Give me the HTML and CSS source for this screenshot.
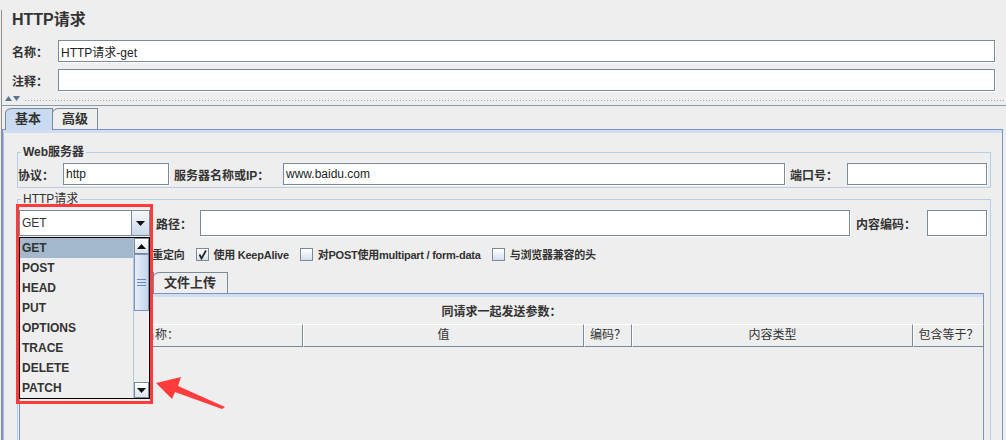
FILE: index.html
```html
<!DOCTYPE html>
<html lang="zh-CN">
<head>
    <meta charset="UTF-8">
    <title>HTTP请求</title>
    <link rel="stylesheet" href="styles.css">
</head>
<body>
    <div class="app">
        <div class="title">HTTP请求</div>

        <div class="field-row">
            <span class="field-label">名称：</span>
            <input class="text-input" value="HTTP请求-get">
        </div>
        <div class="field-row second">
            <span class="field-label">注释：</span>
            <input class="text-input" value="">
        </div>

        <!-- split pane divider -->
        <div class="splitter">
            <svg class="split-arrow" width="7" height="5" viewBox="0 0 7 5"><path d="M0 5 L3.5 0 L7 5 Z" fill="#5d7190"/></svg>
            <svg class="split-arrow" width="7" height="5" viewBox="0 0 7 5"><path d="M0 0 L7 0 L3.5 5 Z" fill="#5d7190"/></svg>
            <div class="dots"></div>
        </div>

        <div class="tabs">
            <div class="tab active basic">基本</div>
            <div class="tab advanced">高级</div>
        </div>

        <div class="tab-panel">
            <fieldset class="group">
                <legend>Web服务器</legend>
                <div class="group-row">
                    <span class="label w-proto">协议：</span>
                    <input class="text-input proto" value="http">
                    <span class="label w-host">服务器名称或IP：</span>
                    <input class="text-input host" value="www.baidu.com">
                    <span class="label w-port">端口号：</span>
                    <input class="text-input port" value="">
                </div>
            </fieldset>

            <fieldset class="group http">
                <legend class="plain">HTTP请求</legend>
                <div class="group-row tall">
                    <div class="combo">
                        <span class="combo-value">GET</span>
                        <span class="combo-btn">
                            <svg width="9" height="5" viewBox="0 0 9 5"><path d="M0 0 L9 0 L4.5 5 Z" fill="#111"/></svg>
                        </span>
                    </div>
                    <span class="label w-path">路径：</span>
                    <input class="text-input path" value="">
                    <span class="label w-enc">内容编码：</span>
                    <input class="text-input enc" value="">
                </div>

                <div class="option-row">
                    <label class="option"><span class="checkbox"></span>自动重定向</label>
                    <label class="option"><span class="checkbox"></span>跟随重定向</label>
                    <label class="option"><span class="checkbox checked"><svg width="11" height="11" viewBox="0 0 11 11"><path d="M2.5 5.5 L4.5 9.5 L9 1.5" fill="none" stroke="#222" stroke-width="1.7"/></svg></span>使用 KeepAlive</label>
                    <label class="option"><span class="checkbox"></span>对POST使用multipart / form-data</label>
                    <label class="option"><span class="checkbox"></span>与浏览器兼容的头</label>
                </div>

                <!-- first tab sits under the open list -->
                <div class="sub-tabs">
                    <div class="tab active params"></div>
                    <div class="tab upload">文件上传</div>
                </div>
                <div class="param-panel">
                    <div class="param-caption">同请求一起发送参数：</div>
                    <div class="param-head">
                        <div class="head-cell">名称：</div>
                        <div class="head-cell">值</div>
                        <div class="head-cell">编码？</div>
                        <div class="head-cell">内容类型</div>
                        <div class="head-cell">包含等于？</div>
                    </div>
                </div>
            </fieldset>
        </div>
    </div>

    <!-- open combo list, drawn over the form -->
    <div class="popup">
        <div class="popup-list">
            <div class="popup-item active">GET</div>
            <div class="popup-item">POST</div>
            <div class="popup-item">HEAD</div>
            <div class="popup-item">PUT</div>
            <div class="popup-item">OPTIONS</div>
            <div class="popup-item">TRACE</div>
            <div class="popup-item">DELETE</div>
            <div class="popup-item">PATCH</div>
        </div>
        <div class="scrollbar">
            <div class="scroll-btn">
                <svg width="9" height="5" viewBox="0 0 9 5"><path d="M0 5 L4.5 0 L9 5 Z" fill="#111"/></svg>
            </div>
            <div class="scroll-thumb"><span class="grip"></span></div>
            <div class="scroll-track"></div>
            <div class="scroll-btn">
                <svg width="9" height="5" viewBox="0 0 9 5"><path d="M0 0 L9 0 L4.5 5 Z" fill="#111"/></svg>
            </div>
        </div>
    </div>

    <!-- annotation -->
    <div class="callout-box"></div>
    <svg class="callout-arrow" width="80" height="45" viewBox="0 0 80 45">
        <path d="M6 13 L31 7 L28 16 L75 37 L72 39 L25 22 L22 29 Z" fill="#ff3b3b"/>
    </svg>
</body>
</html>
```

FILE: styles.css
```css
:root {
    --bg: #eeeeee;
    --edge: #7a8a99;
    --tab-blue: #c8dbf0;
    --panel-blue: #7b93c4;
    --strip: #cfdff1;
    --group: #b7cde6;
    --text: #333;
    --mark: #ff3b3b;
    --ui-font: "Liberation Sans", "Noto Sans CJK SC", sans-serif;
}

body {
    margin: 0;
    width: 1006px;
    height: 440px;
    overflow: hidden;
    position: relative;
    background: var(--bg);
    font-family: var(--ui-font);
    font-size: 12px;
    color: var(--text);
}

.app {
    margin-left: 1px;
    border-left: 1px solid #909090;
    height: 100%;
}

.title {
    margin: 10px 0 0 10px;
    height: 20px;
    line-height: 20px;
    font-size: 16px;
    font-weight: bold;
}

.field-row {
    display: flex;
    align-items: center;
    margin: 10px 11px 0 10px;
}

.field-row.second {
    margin-top: 7px;
}

.field-label {
    width: 46px;
    font-weight: bold;
    font-size: 12px;
}

.text-input {
    flex: 1;
    min-width: 0;
    height: 22px;
    box-sizing: border-box;
    border: 1px solid var(--edge);
    box-shadow: 1px 1px 0 #fff;
    background: #fff;
    padding: 0 2px;
    font-family: var(--ui-font);
    font-size: 12px;
    color: #222;
    outline: none;
}

/* split pane */
.splitter {
    height: 14px;
    border-bottom: 1px solid #8c9aa8;
    display: flex;
    align-items: flex-start;
    padding-left: 3px;
    gap: 1px;
}

.split-arrow {
    margin-top: 5px;
}

.dots {
    flex: 1;
    height: 3px;
    margin: 8px 0 0 3px;
    background-image: radial-gradient(#9aa6b2 0.8px, transparent 1px);
    background-size: 3px 3px;
}

/* tabs */
.tabs {
    display: flex;
    margin: 2px 0 0 3px;
    height: 21px;
}

.tab {
    height: 21px;
    box-sizing: border-box;
    border: 1px solid var(--edge);
    border-bottom: none;
    border-top-left-radius: 7px 5px;
    padding-left: 9px;
    line-height: 20px;
    font-size: 13px;
    font-weight: bold;
    background: var(--bg);
    white-space: nowrap;
}

.tab + .tab {
    margin-left: -1px;
}

.tab.active {
    position: relative;
    z-index: 1;
    height: 22px;
    background: var(--tab-blue);
}

.tab.basic { width: 48px; }
.tab.advanced { width: 46px; }
.tab.params { width: 135px; }
.tab.upload { width: 75px; padding-left: 10px; }

.tab-panel {
    margin-right: 3px;
    height: 400px;
    border: 1px solid var(--panel-blue);
    box-shadow: inset 0 3px 0 var(--strip), inset 1px 0 0 #a9bfe1;
    padding: 15px 11px 0 14px;
}

/* titled groups */
.group {
    margin: 0;
    padding: 0 3px 2px 0;
    border: 1px solid var(--group);
    min-width: 0;
}

.group legend {
    margin-left: 3px;
    padding: 0 2px;
    line-height: 14px;
    font-weight: bold;
    font-size: 12px;
}

.group legend.plain {
    font-weight: normal;
}

.group.http {
    margin-top: 4px;
    height: 400px;
}

.group-row {
    display: flex;
    align-items: center;
    margin-top: 4px;
}

.label {
    font-weight: bold;
    white-space: nowrap;
}

.w-proto { width: 45px; }
.w-host { width: 109px; margin-left: 5px; }
.w-port { width: 57px; margin-left: 5px; }
.w-path { width: 44px; margin-left: 6px; }
.w-enc { width: 71px; margin-left: 6px; }

.proto { flex: none; width: 106px; }
.port { flex: none; width: 140px; }
.enc { flex: none; width: 60px; }

.group-row.tall .text-input {
    height: 26px;
}

.combo {
    width: 131px;
    height: 26px;
    box-sizing: border-box;
    margin-left: 1px;
    display: flex;
    border: 1px solid var(--edge);
    background: #fff;
}

.combo-value {
    flex: 1;
    line-height: 24px;
    padding-left: 2px;
    font-size: 12px;
}

.combo-btn {
    width: 17px;
    border-left: 1px solid var(--edge);
    background: linear-gradient(#f6f9fc, #c9d8e8);
    display: flex;
    align-items: center;
    justify-content: center;
}

/* option checkboxes */
.option-row {
    display: flex;
    align-items: center;
    height: 20px;
    margin-top: 8px;
    padding-left: 12px;
    font-size: 11px;
    font-weight: bold;
    letter-spacing: -0.25px;
}

.option {
    display: flex;
    align-items: center;
    gap: 5px;
    margin-right: 11px;
    white-space: nowrap;
}

.checkbox {
    width: 13px;
    height: 13px;
    box-sizing: border-box;
    border: 1px solid var(--edge);
    background: linear-gradient(#ffffff, #d5dfea);
    display: flex;
    align-items: center;
    justify-content: center;
}

/* parameter tabs */
.sub-tabs {
    display: flex;
    margin: 8px 0 0 1px;
    height: 21px;
}

.param-panel {
    margin: 0 3px 0 1px;
    height: 300px;
    border: 1px solid var(--panel-blue);
    box-shadow: inset 0 3px 0 var(--strip);
}

.param-caption {
    margin-top: 8px;
    line-height: 20px;
    text-align: center;
    font-weight: bold;
}

.param-head {
    display: grid;
    grid-template-columns: 283px 281px 48px 281px 71px;
    margin-top: 2px;
}

.head-cell {
    height: 23px;
    box-sizing: border-box;
    border-top: 1px solid #fff;
    border-left: 1px solid #fff;
    border-right: 1px solid var(--edge);
    border-bottom: 1px solid var(--edge);
    line-height: 21px;
    text-align: center;
}

.head-cell:first-child {
    border-left: none;
}

/* dropdown list overlay */
.popup {
    position: absolute;
    z-index: 5;
    left: 19px;
    top: 237px;
    width: 131px;
    height: 162px;
    box-sizing: border-box;
    border: 1px solid #000;
    background: var(--bg);
    display: flex;
}

.popup-list {
    flex: 1;
}

.popup-item {
    height: 20px;
    line-height: 20px;
    padding-left: 2px;
    font-weight: bold;
    font-size: 12px;
}

.popup-item.active {
    background: #a3b8cc;
}

.scrollbar {
    width: 15px;
    display: flex;
    flex-direction: column;
    border-left: 1px solid #b9c6d3;
}

.scroll-btn {
    height: 16px;
    box-sizing: border-box;
    border: 1px solid var(--edge);
    background: linear-gradient(#ffffff, #dbe3ec);
    display: flex;
    align-items: center;
    justify-content: center;
}

.scroll-thumb {
    height: 57px;
    box-sizing: border-box;
    border: 1px solid var(--panel-blue);
    background: linear-gradient(90deg, #e6eef8, #c3d5ec);
    display: flex;
    align-items: center;
    justify-content: center;
}

.grip {
    width: 9px;
    height: 5px;
    border-top: 1px solid #6f87b6;
    border-bottom: 1px solid #6f87b6;
    background: linear-gradient(transparent 2px, #6f87b6 2px, #6f87b6 3px, transparent 3px);
}

.scroll-track {
    flex: 1;
}

/* red annotation */
.callout-box {
    position: absolute;
    z-index: 6;
    left: 16px;
    top: 204px;
    width: 137px;
    height: 200px;
    box-sizing: border-box;
    border: 3px solid var(--mark);
}

.callout-arrow {
    position: absolute;
    z-index: 6;
    left: 150px;
    top: 370px;
}
```
